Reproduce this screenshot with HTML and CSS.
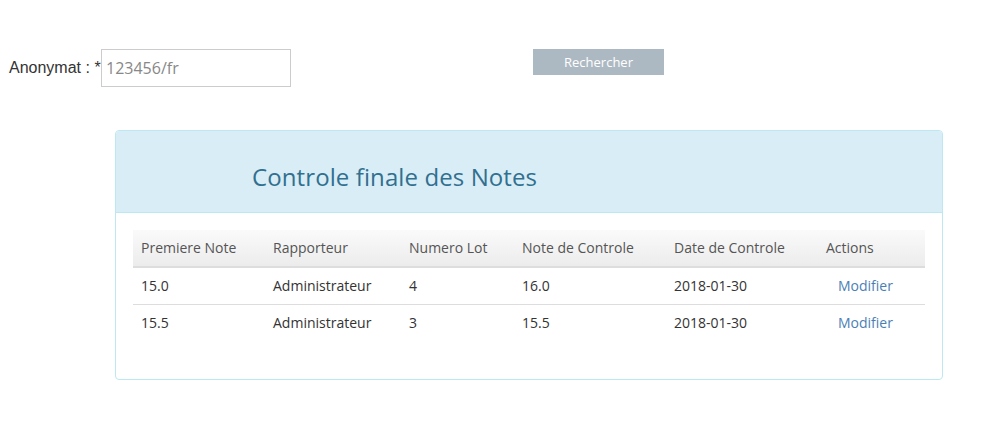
FILE: index.html
```html
<!DOCTYPE html>
<html>
<head>
<meta charset="utf-8">
<link rel="stylesheet" href="styles.css">
</head>
<body>
<div class="search">
  <label class="lbl">Anonymat : *</label>
  <input class="field" type="text" placeholder="123456/fr">
  <button class="btn">Rechercher</button>
</div>
<div class="panel">
  <div class="panel-head"><h3 class="title">Controle finale des Notes</h3></div>
  <div class="panel-body">
    <table class="tbl">
      <thead>
        <tr><th class="c1">Premiere Note</th><th class="c2">Rapporteur</th><th class="c3">Numero Lot</th><th class="c4">Note de Controle</th><th class="c5">Date de Controle</th><th class="c6">Actions</th></tr>
      </thead>
      <tbody>
        <tr><td>15.0</td><td>Administrateur</td><td>4</td><td>16.0</td><td>2018-01-30</td><td class="act"><a class="link">Modifier</a></td></tr>
        <tr><td>15.5</td><td>Administrateur</td><td>3</td><td>15.5</td><td>2018-01-30</td><td class="act"><a class="link">Modifier</a></td></tr>
      </tbody>
    </table>
  </div>
</div>
</body>
</html>
```
FILE: styles.css
```css
body { margin: 0; background: #fff; font-family: "Open Sans", sans-serif; color: #333; }
.search { display: flex; align-items: flex-start; padding: 49px 0 0 9px; height: 81px; }
.lbl { font-family: "Liberation Sans", Arial, sans-serif; font-size: 16px; color: #333; margin-top: 10px; width: 92px; }
.field { box-sizing: border-box; width: 190px; height: 38px; border: 1px solid #ccc; padding: 0 4px; font-family: "Open Sans", sans-serif; font-size: 16px; color: #555; outline: none; }
.field::placeholder { color: #888; }
.btn { margin-left: 242px; width: 131px; height: 26px; background: #adb9c2; border: none; color: #fff; font-family: "Open Sans", sans-serif; font-size: 13px; padding: 0; }
.panel { margin-left: 115px; width: 828px; box-sizing: border-box; border: 1px solid #bce8f1; border-radius: 4px; }
.panel-head { background: #d9edf7; border-bottom: 1px solid #bce8f1; height: 81px; display: flex; align-items: center; padding-left: 136px; border-radius: 3px 3px 0 0; }
.title { margin: 0; font-weight: 400; font-size: 24px; letter-spacing: 0.1px; color: #31708f; padding-top: 10px; }
.panel-body { padding: 17px 17px 38px 17px; }
.tbl { width: 100%; border-collapse: collapse; font-size: 14px; }
.tbl th { text-align: left; font-weight: 400; color: #555; padding: 0 8px 2px; height: 34px; background: linear-gradient(#fafafa, #ececec); border-bottom: 2px solid #ddd; }
.tbl td { padding: 0 8px 2px; height: 34px; border-top: 1px solid #ddd; color: #333; }
.tbl tbody tr:first-child td { border-top: none; }
.c1 { width: 116px; } .c2 { width: 120px; } .c3 { width: 97px; } .c4 { width: 136px; } .c5 { width: 136px; }
.act { padding-left: 20px !important; }
.link { color: #4a7fb5; text-decoration: none; }
```
